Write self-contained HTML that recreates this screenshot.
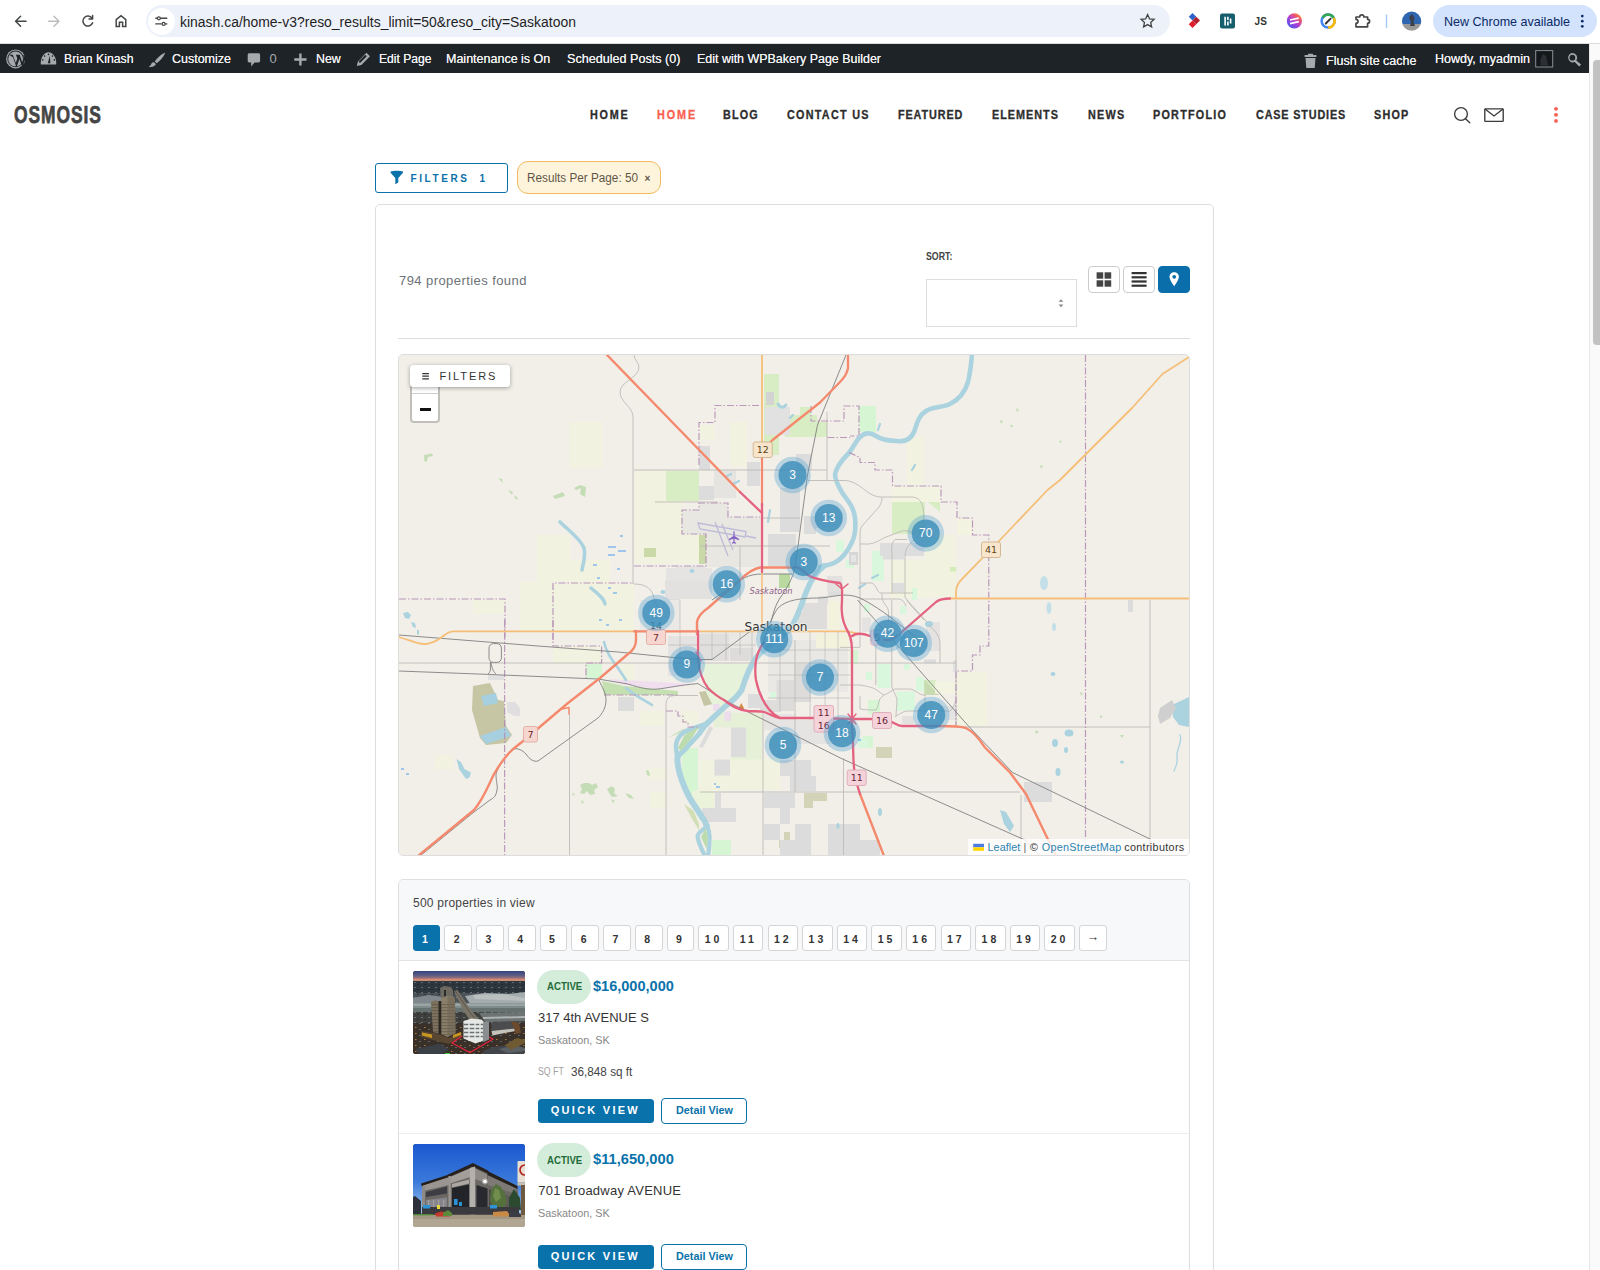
<!DOCTYPE html>
<html lang="en">
<head>
<meta charset="utf-8">
<title>Home v3 - Brian Kinash</title>
<style>
*{box-sizing:border-box;margin:0;padding:0}
html,body{width:1600px;height:1270px;overflow:hidden;background:#fff}
body{font-family:"Liberation Sans","DejaVu Sans",sans-serif;color:#333;position:relative}
.b{position:absolute}
.t{position:absolute;white-space:nowrap;line-height:1;transform-origin:0 50%}
svg{position:absolute;overflow:visible}
/* browser chrome */
#chrome{left:0;top:0;width:1600px;height:44px;background:#fff;border-bottom:1px solid #dadce0}
#urlpill{left:146px;top:5px;width:1024px;height:32px;border-radius:16px;background:#edf1fa}
#urlicon{left:148px;top:8px;width:27px;height:27px;border-radius:14px;background:#fff}
#newchrome{left:1433px;top:5px;width:164px;height:32px;border-radius:16px;background:#d3e3fd}
/* wp admin bar */
#wpbar{left:0;top:44px;width:1589px;height:29px;background:#1d2327}
/* scrollbar */
#sbar{left:1589px;top:44px;width:11px;height:1226px;background:#fafafa;border-left:1px solid #e8e8e8}
#sthumb{left:1593px;top:60px;width:7px;height:285px;border-radius:4px 0 0 4px;background:#c2c2c2}
/* content */
#card{left:375px;top:203.8px;width:838.6px;height:1100px;border:1px solid #dedede;border-radius:5px;background:#fff}
#fbtn{left:375px;top:163px;width:133px;height:30px;border:1px solid #0a72ab;border-radius:3px;background:#fff}
#chip{left:517px;top:161px;width:144px;height:33px;border:1px solid #f3b95f;border-radius:11px;background:#fef4dc}
#sel{left:926px;top:279px;width:151px;height:48px;border:1px solid #ddd;background:#fff}
.vb{top:266px;width:32px;height:27px;border:1px solid #ccc;border-radius:4px;background:#fff}
#hr1{left:398px;top:338px;width:792px;height:1px;background:#ddd}
#map{left:398px;top:354px;width:792px;height:502px;border:1px solid #ddd;border-radius:5px;background:#f2efe9;overflow:hidden}
#map svg{left:0;top:0}
#mfbtn{left:11px;top:10px;width:100px;height:22px;border-radius:3px;background:#fff;box-shadow:0 1px 4px rgba(0,0,0,.35)}
#zoomc{left:11px;top:10px;width:30px;height:58px;border:2px solid rgba(0,0,0,.2);border-radius:4px;background:#fff;background-clip:padding-box}
#attr{right:0;bottom:0;width:221px;height:16px;background:rgba(255,255,255,.8)}
.mk{position:absolute;width:36px;height:36px;margin:-18px 0 0 -18px;border-radius:18px;background:rgba(80,150,195,.45)}
.mk i{position:absolute;left:4.5px;top:4.5px;width:27px;height:27px;border-radius:14px;background:rgba(45,125,175,.88);color:#fff;font:normal 11px/27px "Liberation Sans",sans-serif;text-align:center;display:block}
.sh{position:absolute;border-radius:2px;font:normal 9.5px/1 "DejaVu Sans","Liberation Sans",sans-serif;text-align:center;color:#5a3a2a}
.sh.o{background:#f8e5cb;border:1px solid #cbb08a;color:#5a4520}
.sh.p{background:#f7d6d2;border:1px solid #e2a59f;color:#6a2a2a}
.sh.r{background:#f2d0d8;border:1px solid #dca0b0;color:#6a2238}
#list{left:398px;top:879px;width:792px;height:420px;border:1px solid #dedede;border-radius:5px;background:#fff;overflow:hidden}
#lhead{left:0;top:0;width:792px;height:81px;background:#f7f8f9;border-bottom:1px solid #e3e3e3}
.pg{position:absolute;top:924.6px;height:26px;border:1px solid #d5d5d5;border-radius:3px;background:#fff;font-weight:bold;font-size:10.5px;line-height:26px;text-align:center;letter-spacing:3px;color:#333}
.pg.on{background:#0a72ab;border-color:#0a72ab;color:#fff}
.badge{left:537px;width:54px;height:34px;border-radius:17px;background:#d4edda}
.qv{left:537.5px;width:116px;height:24px;border-radius:3.5px;background:#0a72ab}
.dv{left:661px;width:86px;height:26px;border-radius:4px;border:1px solid #0a72ab;background:#fff}
.ph{left:413px;width:112px;height:83px;border-radius:3px;overflow:hidden;background:#555}
.ph svg{left:0;top:0}
#sep1{left:399px;top:1133px;width:790px;height:1px;background:#ececec}
</style>
</head>
<body>
<!-- BROWSER CHROME -->
<div class="b" id="chrome"></div>
<div class="b" id="urlpill"></div><div class="b" id="urlicon"></div>
<div class="b" id="newchrome"></div>
<svg width="1600" height="44" viewBox="0 0 1600 44" style="left:0;top:0">
<g fill="none" stroke="#444746" stroke-width="1.5" stroke-linecap="round" stroke-linejoin="round">
<path d="M26 21.2H15.6M20.6 16.2l-5 5 5 5"/>
<path d="M48.6 21.2H59M54 16.2l5 5-5 5" stroke="#bdbdbd"/>
<path d="M92 18.2a5 5 0 1 0 .6 4.6M92.6 15.4v3.6h-3.6"/>
<path d="M116.2 26.6v-7l4.8-3.9 4.8 3.9v7h-3.2v-4.4h-3.2v4.4z" stroke-linejoin="miter"/>
<path d="M155.8 18.3h1M161.2 18.3h5.6M155.8 23.9h5.4M165.6 23.9h1.2" stroke-width="1.4"/>
<circle cx="158.9" cy="18.3" r="1.5" stroke-width="1.3"/><circle cx="163.6" cy="23.9" r="1.5" stroke-width="1.3"/>
<path d="M1147.6 14.6l1.95 4.2 4.55.5-3.4 3.1.95 4.5-4.05-2.3-4.05 2.3.95-4.5-3.4-3.1 4.55-.5z" stroke-width="1.3" stroke-linejoin="miter"/>
<path d="M1356 17h3.700a2.100 2.100 0 1 1 4.200 0h3.700v2.300a2 2 0 1 1 0 4v3.500h-11.600v-3.500a2 2 0 1 0 0-4z" stroke-width="1.700"/>
</g>
<path d="M1386.5 14.5v13.5" stroke="#a8c7fa" stroke-width="1.4"/>
<!-- extension 1 -->
<path d="M1192.500 13l3.750 3.750-3.750 3.750-3.750-3.750z" fill="#2f62c8"/><path d="M1196.250 16.750l3.750 3.750-3.750 3.750-3.750-3.750z" fill="#b3202c"/><path d="M1192.500 20.500l3.750 3.750-3.750 3.750-3.750-3.750z" fill="#dc1f2a"/>
<!-- extension 2 -->
<rect x="1220" y="13.600" width="15" height="15" rx="2" fill="#155e6e"/><path d="M1225.100 16.800v8.800M1227.900 16.800v3.200M1227.900 21.600v4M1230.600 18.600v5" stroke="#fff" stroke-width="1.600" fill="none"/>
<!-- extension 4 -->
<defs><linearGradient id="g4" x1=".15" y1=".9" x2=".85" y2=".1"><stop offset="0" stop-color="#4a55ea"/><stop offset=".45" stop-color="#b03fd6"/><stop offset=".8" stop-color="#ee5a6a"/><stop offset="1" stop-color="#f58a3a"/></linearGradient></defs>
<circle cx="1294.400" cy="20.900" r="7.600" fill="url(#g4)"/><path d="M1290 20l8.750-1.900M1290 23.600l8.750-1.900" stroke="#fff" stroke-width="1.700"/>
<!-- extension 5 -->
<circle cx="1328.100" cy="21.100" r="6.500" fill="#fff" stroke="#4285f4" stroke-width="2.500"/>
<path d="M1322.470 17.850a6.500 6.500 0 0 1 11.260 0" fill="none" stroke="#34a853" stroke-width="2.500"/>
<path d="M1333.730 17.850a6.500 6.500 0 0 1-5.630 9.750" fill="none" stroke="#fbbc04" stroke-width="2.500"/>
<path d="M1325.800 23.500l4.800-4.800" stroke="#333" stroke-width="1.900" stroke-linecap="round"/>
<!-- avatar -->
<defs><clipPath id="av"><circle cx="1411.6" cy="21.2" r="9.6"/></clipPath></defs>
<g clip-path="url(#av)"><rect x="1402" y="11" width="20" height="13" fill="#2f66b0"/><rect x="1402" y="24" width="20" height="8" fill="#9a9a98"/><path d="M1409 17l3-3 2.5 3.5-1 4.5 1.5 4h-5l1-4z" fill="#3a3f4a"/></g>
<!-- menu dots -->
<g fill="#0a2a66"><circle cx="1582.3" cy="16.1" r="1.35"/><circle cx="1582.3" cy="21.2" r="1.35"/><circle cx="1582.3" cy="26.3" r="1.35"/></g>
</svg>

<!-- WP ADMIN BAR -->
<div class="b" id="wpbar"></div>
<svg width="1600" height="30" viewBox="0 43.6 1600 30" style="left:0;top:43.6px">
<g fill="#a7aaad">
<!-- wp logo -->
<circle cx="15.6" cy="58.5" r="9.5"/>
<circle cx="15.6" cy="58.5" r="8.3" fill="#1d2327"/>
<circle cx="15.6" cy="58.5" r="7.4"/>
<path d="M9.2 54.4h3.6l3 8.2 1.5-4.4-1.4-3.8h3.8l2.7 8 1.2-4.2c.4-1.5 0-2.4-.6-3.2l1.4-.3 1 3.5-3 8.8-3-8.3-2.9 8.3-3.4-9.8z" fill="#1d2327"/>
<!-- dashboard -->
<path d="M40.8 64.2c-.6-6.500 3-12.300 7.700-12.300s8.300 5.800 7.700 12.300z"/>
<path d="M47.800 62.800l2-7.500.6 7.600z" fill="#1d2327"/>
<g fill="#1d2327"><circle cx="48.500" cy="54" r=".8"/><circle cx="44.600" cy="55.700" r=".8"/><circle cx="52.400" cy="55.700" r=".8"/><circle cx="42.700" cy="59.500" r=".8"/><circle cx="54.300" cy="59.500" r=".8"/></g>
<!-- brush -->
<path d="M164.800 52.400c-3.500 1.500-8 5.500-10 8.600l2 1.900c3-2 7-6.700 8.400-10.200zM154 61.800l1.900 1.800c-.6 2-3.400 3.400-7.300 2.700 2-.8 2.300-2.300 3-3.500.6-.9 1.600-1.200 2.400-1z"/>
<!-- comment -->
<path d="M249.300 52.800h9.200c.9 0 1.600.7 1.600 1.600v6c0 .9-.7 1.600-1.600 1.600h-4l-3.300 4.200v-4.200h-1.900c-.9 0-1.600-.7-1.600-1.600v-6c0-.9.700-1.600 1.600-1.600z"/>
<!-- plus -->
<path d="M299.200 53h2.400v4.900h4.900v2.400h-4.900v4.900h-2.400v-4.900h-4.900v-2.400h4.900z"/>
<!-- pencil -->
<path d="M366.400 52.300l3.600 3.600-8.600 8.600-4.600 1.200 1.100-4.700zM360 62.700l-1.500-1.500 6.800-6.800 1.500 1.500z" fill-rule="evenodd"/>
<!-- trash -->
<path d="M1308 53.300h5v1.400h3.400v1.800h-11.800v-1.800h3.400zM1305.500 57.600h10l-.8 9.900h-8.400z"/>
<!-- search -->
<path d="M1572.400 52.600a4.700 4.700 0 0 1 3.900 7.400l4.800 4.100-1.900 2-4.500-4.500a4.700 4.700 0 1 1-2.300-9zm0 1.800a2.900 2.900 0 1 0 0 5.800 2.900 2.900 0 0 0 0-5.800z" fill-rule="evenodd"/>
</g>
<!-- avatar -->
<rect x="1535.700" y="50.200" width="17" height="16.400" fill="#15181b" stroke="#8c8f94" stroke-width="1"/>
<path d="M1540.500 65v-6l2.500-5.500 3 2 2 9.500z" fill="#2c3035"/>
</svg>

<div class="b" id="sbar"></div><div class="b" id="sthumb"></div>
<!-- SITE HEADER -->
<div class="t" id="logo" style="left:13.5px;top:103.4px;font-size:24.4px;font-weight:bold;color:#454545;transform-origin:0 0;transform:scaleX(.715);letter-spacing:1.3px;-webkit-text-stroke:.75px #454545">OSMOSIS</div>
<svg width="120" height="30" viewBox="1450 100 120 30" style="left:1450px;top:100px">
<g fill="none" stroke="#3a3a3a" stroke-width="1.35">
<circle cx="1461" cy="114" r="6.4"/><path d="M1465.500 118.700l4.300 4" stroke-linecap="round"/>
<rect x="1484.800" y="108.800" width="18.400" height="12.600" rx=".6"/><path d="M1485 109l9 7 9-7"/>
</g>
<g fill="#f95f51"><circle cx="1556" cy="108.800" r="1.900"/><circle cx="1556" cy="114.800" r="1.900"/><circle cx="1556" cy="120.900" r="1.900"/></g>
</svg>

<!-- CONTENT -->
<div class="b" id="card"></div>
<div class="b" id="fbtn"></div>
<div class="b" id="chip"></div>
<div class="b" id="sel"></div>
<div class="b vb" style="left:1088px"></div>
<div class="b vb" style="left:1123px"></div>
<div class="b vb" style="left:1158px;background:#0a6eab;border-color:#0a6eab"></div>
<div class="b" id="hr1"></div>
<svg width="840" height="200" viewBox="375 150 840 200" style="left:375px;top:150px">
<!-- funnel -->
<path d="M390.600 171.400c3-.9 9.400-.9 12.400 0v1.300l-4.700 5.200v4.700l-3 1.600v-6.300l-4.700-5.200z" fill="#0a72ab"/>
<!-- grid -->
<g fill="#444"><rect x="1096.600" y="272.300" width="6.600" height="6.400"/><rect x="1104.600" y="272.300" width="6.600" height="6.400"/><rect x="1096.600" y="280.300" width="6.600" height="6.400"/><rect x="1104.600" y="280.300" width="6.600" height="6.400"/></g>
<!-- list -->
<g fill="#333"><rect x="1131.600" y="272" width="15" height="2.200"/><rect x="1131.600" y="276.200" width="15" height="2.200"/><rect x="1131.600" y="280.400" width="15" height="2.200"/><rect x="1131.600" y="284.600" width="15" height="2.200"/></g>
<!-- pin -->
<path d="M1174.200 272.200c2.600 0 4.700 2 4.700 4.600 0 3.300-4.700 9.400-4.700 9.400s-4.700-6.100-4.700-9.400c0-2.600 2.100-4.600 4.700-4.600zm0 2.700a1.900 1.900 0 1 0 0 3.800 1.900 1.900 0 0 0 0-3.800z" fill="#fff" fill-rule="evenodd"/>
<!-- select arrows -->
<path d="M1058.600 301.800l2.400-2.600 2.400 2.600zM1058.600 304.600l2.400 2.600 2.400-2.600z" fill="#888"/>

</svg>
<svg width="800" height="510" viewBox="398 354 800 510" style="left:398px;top:354px;z-index:5">
<!-- hamburger -->
<path d="M422.300 373.600h6.600M422.300 376.200h6.600M422.300 378.800h6.600" stroke="#333" stroke-width="1.200"/>
<!-- flag -->
<rect x="973.200" y="843.800" width="10.800" height="3.500" fill="#4c7be1"/><rect x="973.200" y="847.300" width="10.800" height="3.500" fill="#ffd500"/>
</svg>

<!-- MAP -->
<div class="b" id="map">
<svg width="790" height="500" viewBox="399 355 790 500">
<rect x="399" y="355" width="790" height="500" fill="#f2efe9"/>
<!-- farmland / pale areas -->
<g fill="#f1f2df">
<rect x="569.500" y="422" width="33" height="46"/>
<rect x="537" y="535" width="33" height="47"/><rect x="520" y="582" width="33" height="48"/><rect x="473" y="600" width="32" height="14"/>
<rect x="553" y="584" width="81" height="46"/><rect x="570" y="560" width="40" height="24"/>
<rect x="635" y="471" width="31" height="93"/><rect x="666" y="501" width="16" height="63"/><rect x="682" y="534" width="17" height="30"/>
<rect x="700" y="425" width="15" height="15"/><rect x="730" y="422" width="17" height="45"/>
<rect x="907" y="437" width="17" height="48"/><rect x="925" y="535" width="31" height="62"/><rect x="890" y="560" width="35" height="38"/>
<rect x="730" y="758" width="50" height="32"/>
<rect x="640" y="711" width="24" height="15"/><rect x="682" y="711" width="16" height="13"/><rect x="648" y="768" width="18" height="12"/><rect x="650" y="792" width="16" height="16"/>
<rect x="698" y="792" width="16" height="16"/><rect x="553" y="646" width="48" height="17"/><rect x="620" y="664" width="14" height="16"/>
<rect x="957" y="672" width="30" height="54"/><rect x="435" y="755" width="18" height="14"/>
</g>
<!-- grass / light green -->
<g fill="#d9edc5">
<rect x="666" y="471" width="33" height="30"/><rect x="764" y="374" width="15" height="81"/><rect x="785" y="415" width="32" height="22"/>
<rect x="800" y="407" width="11" height="30"/><rect x="811" y="422" width="16" height="15"/><rect x="892" y="502" width="33" height="32"/>
<path d="M928 502h12v10z"/><rect x="924" y="680" width="12" height="14"/>
</g>
<g fill="#c9d9a8"><rect x="699" y="535" width="7" height="29"/><rect x="644" y="548" width="12" height="9"/></g>
<g fill="#d6f5d3">
<rect x="859" y="406" width="17" height="26"/><rect x="586" y="664" width="16" height="14"/><rect x="682" y="748" width="16" height="42"/><rect x="686" y="790" width="10" height="6"/>
<rect x="712" y="840" width="19" height="16"/><rect x="878" y="664" width="10" height="20"/><rect x="850" y="650" width="8" height="14"/><rect x="868" y="700" width="12" height="14"/>
<rect x="779" y="574" width="11" height="14" fill="#b9d9a0"/><rect x="863" y="736" width="10" height="12"/>
</g>
<g fill="#d8f7dc">
<rect x="872" y="551" width="12" height="30"/><rect x="877.500" y="664" width="13" height="24"/><rect x="897" y="691.500" width="18" height="19"/><rect x="916" y="677" width="8" height="14"/>
<rect x="800" y="650" width="6" height="10"/><rect x="786" y="664" width="5" height="8"/><rect x="812" y="684" width="8" height="8"/><rect x="828" y="662" width="6" height="9"/><rect x="770" y="690" width="6" height="8"/>
<rect x="716" y="636" width="5" height="7"/><rect x="730" y="646" width="6" height="6"/><rect x="744" y="640" width="4" height="8"/><rect x="684" y="574" width="8" height="6"/><rect x="700" y="584" width="6" height="8"/><rect x="672" y="600" width="6" height="8"/>
<rect x="864" y="604" width="6" height="8"/><rect x="900" y="606" width="6" height="8"/><rect x="912" y="588" width="5" height="12"/><rect x="846" y="560" width="8" height="8"/><rect x="836" y="540" width="8" height="12"/>
<rect x="866" y="672" width="6" height="8"/><rect x="904" y="664" width="6" height="6"/><rect x="858" y="738" width="10" height="10"/><rect x="822" y="732" width="6" height="8"/>
</g>
<path d="M924.300 679.400L939 695H924.300z" fill="#c8dab0"/>
<g fill="#f3f3e2"><rect x="892" y="486.600" width="48" height="15.400"/><rect x="935" y="681.600" width="21" height="12"/><rect x="957" y="518.600" width="15" height="16.400"/></g>
<rect x="950" y="567" width="6.300" height="4.500" fill="#d3ecba"/>
<!-- khaki -->
<g fill="#c6c5a4">
<path d="M473 686l17-3 8 17 6 1 2 25 6 9-6 8-20 2-6-7-8-28z"/><path d="M699 692l13-2 1 14-9 2z"/>
<rect x="804" y="793" width="23" height="8" fill="#d3d3b8"/><rect x="804" y="801" width="9" height="7" fill="#d3d3b8"/><rect x="876" y="747" width="16" height="11" fill="#d3d3b8"/>
<path d="M779 840h5v-8h6v16h-11z" fill="#d3d3b8"/>
</g>
<!-- airport apron -->
<path d="M682 510h17v-7h29v14h32v50h-54v-33h-24z" fill="#e9e7e2"/>
<!-- built-up grey -->
<g fill="#dddcdc">
<rect x="699" y="446" width="11" height="24"/><rect x="699" y="486" width="15" height="14"/><rect x="747" y="462" width="13" height="24"/>
<rect x="766" y="392" width="8" height="13" fill="#d3d3d3"/><rect x="765" y="407" width="25" height="28" fill="#e2e1e1"/><rect x="796" y="454" width="16" height="16"/>
<rect x="780" y="488" width="20" height="44"/><rect x="768" y="534" width="28" height="32"/><rect x="804" y="516" width="12" height="18"/><rect x="816" y="520" width="14" height="8"/>
<rect x="880" y="543" width="44" height="13" fill="#dedddd"/><rect x="883" y="556" width="21" height="3.500" fill="#dedddd"/><rect x="892" y="583" width="12" height="9.500" fill="#dedddd"/><rect x="849" y="552" width="9" height="13" fill="#d6d6d6"/><rect x="851" y="555" width="5" height="7" fill="#e4e4e4"/>
<rect x="828" y="584" width="14" height="12"/><rect x="668" y="590" width="12" height="10"/>
<rect x="731" y="729" width="15" height="28"/><rect x="715" y="760" width="15" height="15"/><rect x="780" y="760" width="31" height="16"/><rect x="790" y="776" width="26" height="15"/>
<rect x="715" y="793" width="6" height="15"/><rect x="702" y="808" width="34" height="14"/><rect x="764" y="793" width="31" height="15"/><rect x="780" y="808" width="10" height="16"/>
<rect x="764" y="824" width="16" height="16"/><rect x="795" y="824" width="16" height="32"/><rect x="780" y="840" width="15" height="16"/>
<rect x="828" y="824" width="32" height="32"/><rect x="860" y="840" width="20" height="16"/><rect x="618" y="697" width="16" height="14"/>
<rect x="748" y="694" width="14" height="14"/><rect x="1024" y="782" width="28" height="20"/><rect x="714" y="632" width="14" height="22" fill="#e2e1e1"/>
<rect x="714" y="808" width="2" height="0"/><rect x="488" y="675" width="16" height="5" fill="#e0e0e0"/><path d="M507 702h8l5 6v8h-6l-7-4z" fill="#e0dede"/>
<rect x="1128" y="600" width="5" height="12"/><rect x="953" y="660" width="4" height="12" fill="#e0e0e0"/>
</g>
<!-- residential light grey -->
<g fill="#e6e4e2">
<rect x="714" y="470" width="22" height="28"/><rect x="666" y="568" width="46" height="30"/><rect x="676" y="566" width="30" height="6"/>
<rect x="764" y="714" width="32" height="16"/><rect x="796" y="720" width="44" height="24"/>
<rect x="768" y="640" width="80" height="52" fill="#eae8e4"/><rect x="700" y="632" width="56" height="28" fill="#eae8e4"/><rect x="668" y="636" width="28" height="40" fill="#e4e3e2"/>
<rect x="926" y="622" width="14" height="29" fill="#e4e3e2"/><rect x="862" y="617.600" width="9" height="14.400" fill="#e4e3e2"/><rect x="924" y="659.500" width="12" height="4" fill="#dddcdc"/>
<rect x="902" y="716" width="12" height="8" fill="#e2e1e0"/><rect x="940" y="706" width="16" height="14" fill="#e6e4e2"/><rect x="640" y="600" width="40" height="30" fill="#ebe9e5"/>
</g>
<g fill="#dedddc"><rect x="803" y="603" width="24" height="26"/><rect x="798" y="612" width="6" height="12"/><rect x="730" y="648" width="23" height="13"/><rect x="712" y="664" width="12" height="10"/><rect x="760" y="700" width="20" height="12"/><rect x="818" y="596" width="10" height="8"/></g>
<path d="M702 664H752L742 686 730 703 716 712 706 692z" fill="#e7f2da"/>
<path d="M713.600 712.800H762V759.600H731V727.500H713.600z" fill="#e6f0d6"/><rect x="731" y="727.500" width="15" height="29.500" fill="#dddcdc"/>
<g fill="#f3f2dd"><rect x="828.500" y="601" width="11" height="28"/><rect x="816" y="634" width="33" height="14"/></g>
<g fill="#dddcdb"><rect x="794" y="664" width="17" height="38"/><rect x="776.500" y="680" width="17.500" height="31"/><rect x="827" y="576" width="15.500" height="15.500" fill="#e2e1e0"/><rect x="699" y="634" width="30" height="27" fill="#e0dfde"/><rect x="731" y="648" width="17" height="13"/><rect x="665" y="580.500" width="47" height="18.500" fill="#e2e1e0"/></g>
<g fill="#f1f2df"><rect x="699" y="759.600" width="31" height="31.400"/></g><rect x="714.300" y="759.600" width="15.700" height="16" fill="#dddcdc"/>
<rect x="692" y="791" width="22" height="17" fill="#ebf3da"/>
<path d="M709.600 726L713 728 703 747.500 699 747z" fill="#dddcdc"/>
<g fill="#eddcec"><rect x="713" y="704" width="6.600" height="6.700"/><rect x="724.300" y="711.400" width="6.700" height="9.400"/></g>
<path d="M738.300 709L741.300 703 744.300 709z" fill="#d4883f"/>
<!-- pink industrial strip + green strip -->
<path d="M608 679l50 3 36 2-36 5-34-4z" fill="#f0ddee"/>
<path d="M602 681l22 5 54 5v4h-74z" fill="#c4dfb0"/>

<!-- forest blobs -->
<g fill="#b9d8aa" opacity=".8">
<path d="M424 455l8-1.500 1 2.500-5 1-1.500 5-2-.5z M498 478l4 1 1 4z M508 490l5 2-1 3z M514 495l4 3-2 2z M553 496l10-4 2 4-10 3z M574 488l6-3 6 2-1 10-5-3 1-6-5 2z"/>
<path d="M580 785l4-2 5 0 3 2 4-2 2 4-4 3 1 4-5 1-3-4-3 3-4-1 2-4z M607 789l5-3 3 3-1 4 4 3-6 1-3-4z M625 793l6 2 3 4-5-1z M581 800l3 2-2 2z M646 770l3 1 1 5-3-1z M611 799l4 2-2 2z M572 793l3 1-2 2z"/>
<path d="M1000 420l3 1-2 3z M1010 425l3 0-1 3z M1016 408l3 2-2 2z M1040 465l3 1-2 3z M1060 440l2 2-3 1z M1035 730l4 2-3 2z M1120 735l4 0-2 3z M1100 715l3 2-3 1z M1080 692l3 1-2 3z"/>
</g>

<!-- WATER -->
<g fill="none" stroke="#aad3df" stroke-linecap="round" stroke-linejoin="round">
<path d="M972 354C971 366 970 374 968 382C965 392 958 400 950 404C942 408 934 406 926 411C918 416 917 424 914 432C911 439 905 442 897 441C888 441 882 440 876 436C870 432 864 433 859 438C854 444 852 450 848 454C842 460 837 466 835 474C835 480 838 486 843 494C849 502 854 508 855 518C856 528 855 536 852 542C848 551 842 559 834 563C828 566 824 565 820 567" stroke-width="4.600"/>
<path d="M824 566C816 572 811 580 807 590C803 600 800 610 796 618C792 628 786 634 778 640C770 646 762 650 756 658C750 666 746 676 741.700 690C738 696 731 702 725.700 706C720 711 713 718 707 723.500" stroke-width="5.600"/>
<path d="M707 723.500C698 727 690 729 684 732C679 736 676 740 676 746C676 750 677 754 677.500 757" stroke-width="4.600"/>
<path d="M707 723.500C703 728 701 731 699 734C694 740 689 744 685.500 749C682 752 679 755 677.500 757" stroke-width="5"/>
<path d="M677.500 757C677 762 678 766 678.800 770C680 776 682 781 684 786C687 793 690 799 693.500 804C697 809 700 814 703 818.500C705 821 706 824 707 826.500" stroke-width="6"/>
<path d="M707 826.500C702 830 698 833 697.500 836C698 842 701 848 704 854 M707 826.500C709 830 709.600 834 709.600 837C709.600 844 709 850 708 857" stroke-width="4.200"/>
<path d="M560 522C568 530 580 538 584 548C586 556 583 564 582 570" stroke-width="3.600"/>
<path d="M591 588C598 594 604 598 605 604" stroke-width="3.500"/>
<path d="M604 642C606 652 612 660 618 668C622 674 624 677 626 680 M626 688C632 694 644 700 652 705" stroke-width="2.600"/>
<path d="M778 404C780 408 784 408 786 405" stroke-width="3"/>
<path d="M770 510l-2 12 M790 418l3 -3 M733 484l6-3 M727 476l4-2 M859 588l6-4 M872 578l6-3 M878 430l2-6 M912 470l3-5" stroke-width="2.200"/>
<path d="M1180 735c3 8-4 14-3 22s-2 10-3 14" stroke-width="1.300"/>
</g>
<g fill="#aad3df">
<path d="M456.500 759l2.500 10 7 10 3.500-1.500 1.500-5-6.500-3.500-3.500-7z"/><path d="M481 696l15-3 2 10-14 3z M480 736l26-9 5 9-25 8z" fill="#a6cfdf"/>
<ellipse cx="1055" cy="743" rx="3" ry="4"/><ellipse cx="1069" cy="733" rx="4.500" ry="3.500"/><ellipse cx="1058" cy="772" rx="2.500" ry="4"/><ellipse cx="1066" cy="750" rx="2" ry="3"/>
<path d="M1000 810l6 2 8 14-4 6-6-8z"/><ellipse cx="1053" cy="674" rx="2.500" ry="2"/><ellipse cx="1122" cy="762" rx="2" ry="1.500"/>
<path d="M403 613l5-1 3 3-2 4-4-1z M411 622l4 1 1 5-3-1z M417 630l2 0 0 5-2-1z"/>
<path d="M1172 705l17-8v30l-10-2-6-8z"/><path d="M1160 708l12-8 4 8-6 10-10 6-2-8z" fill="#cfcfcf"/>
<ellipse cx="929" cy="624" rx="4" ry="3"/><ellipse cx="760" cy="638" rx="0" ry="0"/><ellipse cx="880" cy="812" rx="2" ry="4"/><ellipse cx="838" cy="826" rx="1.500" ry="3"/>
<ellipse cx="692" cy="571" rx="2.500" ry="2"/><ellipse cx="663" cy="592" rx="2.500" ry="2"/>
<ellipse cx="1044" cy="583" rx="4" ry="7" fill="#c3dfe8"/><ellipse cx="1049" cy="608" rx="2.500" ry="6" fill="#c3dfe8"/><ellipse cx="1054" cy="627" rx="2" ry="4" fill="#c3dfe8"/>
</g>
<!-- intermittent blue dashes -->
<g stroke="#4d9cf5" stroke-width="1.200" fill="none">
<path d="M608 547h8 M618 551h8 M608 555h7 M593 565h4 M617 569h3 M597 578h3 M608 588h3 M613 593h4 M620 536h3 M599 620h3 M619 620h3 M606 625h3 M401 769h3 M406 774h3 M716 787h4 M714 784h2 M858 740h3"/>
</g>
<!-- islands in river -->
<path d="M678 748L684.500 735 699 726.500 693.500 735.500 681 751z M701 837L705.600 828.500 708 837 706.500 849z" fill="#bcdcae"/><path d="M668 738L685.500 727.500 679 733z" fill="#c2dfb2"/><path d="M684 804L693.500 810.500 699 824V830.500L691 817z" fill="#d2dfb4"/>
<!-- MINOR ROADS -->
<g fill="none" stroke="#bdbbb7" stroke-width=".9">
<path d="M634 355C634 360 639 362 639 368C638 378 620 382 620 392C620 402 632 406 633 416V584"/>
<path d="M634 470H827 M655 502H718 M399 663H956 M700 792H1020 M1021 795V856 M956 727H1150 M1150 600V856 M956 600V727"/>
<path d="M569.500 714V856 M666 856V704Q666 696 674 695.500H698 M763 712V856 M843.500 758V856 M795 640V792 M827 412V480"/>
<path d="M808 480.500H846C856 482 862 488 867.500 492C872 495 875 496.500 880 497H913C919 498 922 502 923 508C924 514 924 520 924 526C923 531 921 534 919 535C914 540 908 545 906 550C905 553 905 556 905 560V597C908 602 912 607 915 610L924 620"/>
<path d="M882 497.600C882 501 881 504 879 507L862 526C860 529 860 532 860 535V647"/>
<path d="M860 544H869C876 543 880 540 886 537L902 531C908 530 912 532 915 535"/>
<path d="M892 593.500V553C891 547 892 542 895 539.500H907"/>
<path d="M860 583H872C875 585 876 587 877 589C878 591 879 593 881 593H913"/>
<path d="M860 599H899.500C903 600 905 603 906 606"/>
<path d="M882 593.600C882 597 882 600 884 603C886 606 888.500 608 888.500 612V622"/>
<path d="M840 647.400H860 M875.800 646V685 M891.800 600V686C892 690 896 695 897 699C897 706 896 712 896 716"/>
<path d="M928 625C932 628 936 632 937 634C939 637 940 640 940 644V663"/>
<path d="M840 685H860C866 686 870 687 873 688C878 690 881 694 884 695C888 694 892 690 895 689H910.500C914 690 917 692 919.400 693.700L926 696"/>
<path d="M860 696V709C866 710 872 710 876.400 710C878 706 879 702 879.700 699L884 695"/>
<path d="M925 697V716 M895 717C899 714 903 712 906 711H950C953 708 955 704 956 700"/>
<path d="M907 600L927 622"/>
<path d="M762 546H830 M762 518H800 M700 546H762 M740 546V600"/>
<path d="M634 584C648 584 652 590 654 598C656 606 660 612 668 612"/>
<path d="M768 650H850 M768 675H850 M768 698H850 M780 632V712 M810 632V720 M825 632V720 M838 632V720 M752 632V660" stroke-opacity=".75"/>
<path d="M700 645H756 M712 632V660 M726 632V660 M740 632V655 M668 645H698 M680 600V660" stroke-opacity=".75"/>
</g>
<!-- BOUNDARIES -->
<g fill="none" stroke="#b48fb6" stroke-width="1.200" stroke-dasharray="7 2 1.500 2" opacity=".9">
<path d="M399 599H505V640 M553 640V583H634 M634 566H706V534H682V510H699V503H728V517H760"/>
<path d="M699 465V422.500H715V405.500H761 M811 406V421H844V406H859V436H850 M827.500 437.500H850"/>
<path d="M849 452.500L860 457.500V462.500H875V470H892.500V486H941V502H957V518H972.500V535H988.750V646H980V655H972.500V671H956V725"/>
<path d="M1085.500 355V856 M504.600 620V856 M553 620V646H601.600V663H586V678 M604 695H678 M666 711H678V716H683V722H688V727H698"/>
<path d="M1145 598.500H1190" stroke="#b08a70"/>
</g>
<!-- RAILWAYS -->
<g fill="none" stroke="#808080" stroke-width=".9">
<path d="M846 355L817.500 425L807.500 475L797.500 550L795 567.500C793 578 786 590 780 598C775 606 773 614 771 622"/>
<path d="M399 635L538 646L618 652L668 657L698 659.500H712L752 630"/>
<path d="M399 671L488 674.400L598 679L628 684C640 688 650 690 658 689C668 688 680 685 698 683.600L724 700L842.500 759L1025 840L1040 856"/>
<path d="M857.500 600L967.500 725L1012.500 772.500L1150 839V856"/>
<path d="M764 640C768 628 772 616 778 608C786 600 800 598 820 598C834 597 846 592 860 598C876 606 892 618 904 628C912 634 916 638 920 642"/>
<path d="M712 600L744 578C750 575 756 574 762 574H792"/>
<path d="M599 680C602 688 606 692 606 700C606 708 602 714 598 718L538 761C534 762 530 760 526 754C522 750 518 748 514 749C506 756 498 766 496 774C496 782 498 786 497 790C496 796 494 798 490 800L474 812L420 856"/>
<rect x="489" y="643.600" width="12.400" height="18.800" rx="4.500"/><path d="M490.400 662V670C490 672 489 673 488 674 M491 662C492 670 494 672 496 674"/>
</g>
<!-- airport runways -->
<g fill="none" stroke="#bdbbd8" stroke-width="1.300"><path d="M698 523L746 531.500L745 537L700 529z M715 522L728 556 M722 524L733 550 M746 536L756 538"/></g>
<path d="M734 532v4l-4.500 3v1.200l4.500-1.400v3l-1.400 1v1l2-.6 2 .6v-1l-1.400-1v-3l4.500 1.400v-1.200l-4.500-3v-4c0-1.400-1.200-1.400-1.200 0z" fill="#8461c4" transform="translate(-.6 0)"/>
<!-- PRIMARY (yellow-orange) -->
<g fill="none" stroke="#f5bf78" stroke-width="1.800" stroke-linecap="round" stroke-linejoin="round">
<path d="M762 355V450"/>
<path d="M399 637C410 640 418 645 426 644C434 643 438 640 442 637C446 634 448 631.400 454 631.400H634"/>
<path d="M700 631.400H846C852 632 856 633 860 634"/>
<path d="M762 572V632" stroke-width="1.500"/>
<path d="M1189 357L1162.500 374L1132.500 407.500L1060 480L1047.500 490L1000 540L962 579C958 583 956 587 956 592V598.500"/>
<path d="M950 598.500H1190"/>
</g>
<!-- TRUNK (salmon) -->
<g fill="none" stroke="#f4896d" stroke-width="2.400" stroke-linecap="round" stroke-linejoin="round">
<path d="M607 355L740 492"/>
<path d="M762 450V506" stroke-width="2.200"/>
<path d="M848 355V368C847 374 844 378 840 382L820 402.500L772.500 440L764 449" stroke-width="2.300"/>
<path d="M418 856L474 810C484 798 488 786 494 774C500 764 504 758 510 752C514 748 518 745 522 742L568 703L600 678L628 654C634 650 636 646 636 640V631"/>
<path d="M634 631.300H698" stroke-width="2.300"/>
<path d="M697 634V622C698 616 702 612 708 608L740 580C746 574 752 569 760 567.500H793"/>
<path d="M940 726C950 726 960 726 966 728C974 732 980 740 985 747.500L1010 772.500L1026 794L1056 856"/>
<path d="M860 794L884 856"/>
<path d="M562 709L569 707.500V714" stroke-width="1.500"/>
</g>
<!-- MOTORWAY (pink-red) -->
<g fill="none" stroke="#e4627f" stroke-width="2.300" stroke-linecap="round" stroke-linejoin="round">
<path d="M740 492L762 513"/>
<path d="M762 504V572"/>
<path d="M793 567.500C800 566 804 572 808 575C814 579 824 581 840 583C843 586 842 592 842 600C841 610 842 620 846 628C850 634 852 640 852 650V716"/>
<path d="M836 584l6 5 M848 584l-6 5" stroke-width="1.500"/>
<path d="M852 636C856 633 862 633 870 636C878 639 884 641 890 640C896 638 900 634 904 630L920 616L936 602C940 599 944 598.500 950 598.500"/>
<path d="M698 631V660C699 670 702 680 708 688C714 694 720 698 724 700C732 706 738 710 748 711C756 711.500 760 711 764 712C770 714 774 717 780 718H812L852 719H872C880 719 886 720 892 722C896 724 898 726 902 726H940"/>
<path d="M764 642C760 648 757 654 756 660C755 668 755 674 756 680C758 690 762 700 768 708C771 712 774 715 780 718"/>
<path d="M852 716V724C853 736 853 748 853.500 760C854 770 855 778 857 784C858 788 859 791 860 794"/>
<path d="M848 714l8 10 M856 714l-8 10" stroke-width="1.400"/>
<path d="M696 652l5 9" stroke-width="1.500"/>
</g>
<!-- LABELS -->
<g font-family="'DejaVu Sans','Liberation Sans',sans-serif">
<text x="744.500" y="630.500" font-size="13" fill="#333" textLength="63" lengthAdjust="spacingAndGlyphs" stroke="#f2efe9" stroke-width="2" paint-order="stroke" stroke-opacity=".7">Saskatoon</text>
<text x="749.500" y="593.500" font-size="9" font-style="italic" fill="#8d618b" textLength="43" lengthAdjust="spacingAndGlyphs">Saskatoon</text>
</g>
<!-- SHIELDS -->
<g font-family="'DejaVu Sans','Liberation Sans',sans-serif" font-size="9.500" text-anchor="middle">
<g fill="#f8e5cb" stroke="#c9ac83" stroke-width=".8"><rect x="753.200" y="442" width="19" height="15.500" rx="2"/><rect x="981.500" y="542" width="19" height="15.500" rx="2"/></g>
<g fill="#5a4520"><text x="762.700" y="453.300">12</text><text x="991" y="553.300">41</text></g>
<g fill="#f8d6d0" stroke="#e0a39b" stroke-width=".8"><rect x="646.500" y="629.500" width="19" height="15" rx="2"/><rect x="523.500" y="726.500" width="14" height="15.500" rx="2"/></g>
<g fill="#6a2a2a"><text x="656" y="640.800">7</text><text x="530.500" y="738">7</text><text x="656" y="628.500" fill="#444">14</text></g>
<g fill="#f4d3da" stroke="#dba2b0" stroke-width=".8"><rect x="814" y="705.500" width="19.500" height="26.500" rx="2"/><rect x="872.500" y="712.500" width="19" height="16" rx="2"/><rect x="847.200" y="770" width="19" height="15.500" rx="2"/><rect x="870.800" y="630" width="13" height="15" rx="2"/></g>
<g fill="#6a2238"><text x="823.700" y="716.300">11</text><text x="823.700" y="728.600">16</text><text x="882" y="724">16</text><text x="856.700" y="781.300">11</text><text x="877.300" y="641.300">5</text></g>
</g>
<!-- CLUSTER POINTS -->
<g>
<circle cx="792.5" cy="475" r="18.3" fill="#52a2cf" fill-opacity=".36"/><circle cx="792.5" cy="475" r="14" fill="#378cba" fill-opacity=".78"/><text x="792.5" y="478.6" font-family="'Liberation Sans',sans-serif" font-size="12" fill="#fff" text-anchor="middle">3</text>
<circle cx="828.75" cy="518" r="18.3" fill="#52a2cf" fill-opacity=".36"/><circle cx="828.75" cy="518" r="14" fill="#378cba" fill-opacity=".78"/><text x="828.75" y="521.6" font-family="'Liberation Sans',sans-serif" font-size="12" fill="#fff" text-anchor="middle">13</text>
<circle cx="925.75" cy="533.4" r="18.3" fill="#52a2cf" fill-opacity=".36"/><circle cx="925.75" cy="533.4" r="14" fill="#378cba" fill-opacity=".78"/><text x="925.75" y="537.0" font-family="'Liberation Sans',sans-serif" font-size="12" fill="#fff" text-anchor="middle">70</text>
<circle cx="803.75" cy="562" r="18.3" fill="#52a2cf" fill-opacity=".36"/><circle cx="803.75" cy="562" r="14" fill="#378cba" fill-opacity=".78"/><text x="803.75" y="565.6" font-family="'Liberation Sans',sans-serif" font-size="12" fill="#fff" text-anchor="middle">3</text>
<circle cx="726.75" cy="584.25" r="18.3" fill="#52a2cf" fill-opacity=".36"/><circle cx="726.75" cy="584.25" r="14" fill="#378cba" fill-opacity=".78"/><text x="726.75" y="587.85" font-family="'Liberation Sans',sans-serif" font-size="12" fill="#fff" text-anchor="middle">16</text>
<circle cx="656.25" cy="613" r="18.3" fill="#52a2cf" fill-opacity=".36"/><circle cx="656.25" cy="613" r="14" fill="#378cba" fill-opacity=".78"/><text x="656.25" y="616.6" font-family="'Liberation Sans',sans-serif" font-size="12" fill="#fff" text-anchor="middle">49</text>
<circle cx="774.25" cy="639.25" r="18.3" fill="#52a2cf" fill-opacity=".36"/><circle cx="774.25" cy="639.25" r="14" fill="#378cba" fill-opacity=".78"/><text x="774.25" y="642.85" font-family="'Liberation Sans',sans-serif" font-size="12" fill="#fff" text-anchor="middle">111</text>
<circle cx="887.5" cy="633.75" r="18.3" fill="#52a2cf" fill-opacity=".36"/><circle cx="887.5" cy="633.75" r="14" fill="#378cba" fill-opacity=".78"/><text x="887.5" y="637.35" font-family="'Liberation Sans',sans-serif" font-size="12" fill="#fff" text-anchor="middle">42</text>
<circle cx="913.75" cy="643" r="18.3" fill="#52a2cf" fill-opacity=".36"/><circle cx="913.75" cy="643" r="14" fill="#378cba" fill-opacity=".78"/><text x="913.75" y="646.6" font-family="'Liberation Sans',sans-serif" font-size="12" fill="#fff" text-anchor="middle">107</text>
<circle cx="686.75" cy="664.5" r="18.3" fill="#52a2cf" fill-opacity=".36"/><circle cx="686.75" cy="664.5" r="14" fill="#378cba" fill-opacity=".78"/><text x="686.75" y="668.1" font-family="'Liberation Sans',sans-serif" font-size="12" fill="#fff" text-anchor="middle">9</text>
<circle cx="820" cy="677.5" r="18.3" fill="#52a2cf" fill-opacity=".36"/><circle cx="820" cy="677.5" r="14" fill="#378cba" fill-opacity=".78"/><text x="820" y="681.1" font-family="'Liberation Sans',sans-serif" font-size="12" fill="#fff" text-anchor="middle">7</text>
<circle cx="931.25" cy="715" r="18.3" fill="#52a2cf" fill-opacity=".36"/><circle cx="931.25" cy="715" r="14" fill="#378cba" fill-opacity=".78"/><text x="931.25" y="718.6" font-family="'Liberation Sans',sans-serif" font-size="12" fill="#fff" text-anchor="middle">47</text>
<circle cx="842" cy="733.25" r="18.3" fill="#52a2cf" fill-opacity=".36"/><circle cx="842" cy="733.25" r="14" fill="#378cba" fill-opacity=".78"/><text x="842" y="736.85" font-family="'Liberation Sans',sans-serif" font-size="12" fill="#fff" text-anchor="middle">18</text>
<circle cx="783" cy="745" r="18.3" fill="#52a2cf" fill-opacity=".36"/><circle cx="783" cy="745" r="14" fill="#378cba" fill-opacity=".78"/><text x="783" y="748.6" font-family="'Liberation Sans',sans-serif" font-size="12" fill="#fff" text-anchor="middle">5</text>
</g>
</svg>

<div class="b" id="zoomc"><div class="b" style="left:0;top:26px;width:26px;height:1px;background:#ccc"></div><div class="b" style="left:7.5px;top:41.3px;width:11.5px;height:2.4px;background:#111"></div></div>
<div class="b" id="mfbtn"></div>
<div class="b" id="attr"></div>
</div>
<!-- LIST -->
<div class="b" id="list"><div class="b" id="lhead"></div></div>
<div class="pg on" style="left:412.5px;width:27.8px">1</div>
<div class="pg" style="left:444.2px;width:27.8px">2</div>
<div class="pg" style="left:476.0px;width:27.8px">3</div>
<div class="pg" style="left:507.8px;width:27.8px">4</div>
<div class="pg" style="left:539.5px;width:27.8px">5</div>
<div class="pg" style="left:571.2px;width:27.8px">6</div>
<div class="pg" style="left:603.0px;width:27.8px">7</div>
<div class="pg" style="left:634.8px;width:27.8px">8</div>
<div class="pg" style="left:666.5px;width:27.8px">9</div>
<div class="pg" style="left:698.2px;width:30.6px">10</div>
<div class="pg" style="left:732.9px;width:30.6px">11</div>
<div class="pg" style="left:767.5px;width:30.6px">12</div>
<div class="pg" style="left:802.1px;width:30.6px">13</div>
<div class="pg" style="left:836.7px;width:30.6px">14</div>
<div class="pg" style="left:871.3px;width:30.6px">15</div>
<div class="pg" style="left:905.9px;width:30.6px">16</div>
<div class="pg" style="left:940.5px;width:30.6px">17</div>
<div class="pg" style="left:975.1px;width:30.6px">18</div>
<div class="pg" style="left:1009.7px;width:30.6px">19</div>
<div class="pg" style="left:1044.3px;width:30.6px">20</div>
<div class="pg" style="left:1078.9px;width:28.0px;font-size:12.5px;font-weight:normal;letter-spacing:0;line-height:23px">→</div>
<div class="b" id="sep1"></div>
<div class="b ph" style="top:971px"><svg width="112" height="83" viewBox="0 0 112 83">
<defs><linearGradient id="sk1" x1="0" y1="0" x2="0" y2="1"><stop offset="0" stop-color="#34457e"/><stop offset=".4" stop-color="#5b5a84"/><stop offset=".62" stop-color="#8a6a7c"/><stop offset=".8" stop-color="#cf8a72"/><stop offset="1" stop-color="#c9907a"/></linearGradient>
<pattern id="spk" width="7" height="5" patternUnits="userSpaceOnUse"><rect x="1" y="1" width="2" height="1" fill="#8d959a" opacity=".55"/><rect x="4" y="3" width="2" height="1" fill="#1d2226" opacity=".6"/></pattern>
<pattern id="win" width="3" height="3" patternUnits="userSpaceOnUse"><rect width="3" height="1.200" fill="#4a4338" opacity=".55"/></pattern>
<pattern id="lit" width="9" height="6" patternUnits="userSpaceOnUse"><rect x="2" y="2" width="1.500" height="1" fill="#d9a04a" opacity=".7"/><rect x="6" y="4" width="2" height="1" fill="#7d8489" opacity=".6"/></pattern></defs>
<rect width="112" height="83" fill="#3a322c"/>
<rect width="112" height="10.500" fill="url(#sk1)"/>
<rect y="10" width="112" height="14" fill="#2d353d"/><rect y="10" width="112" height="14" fill="url(#spk)"/>
<rect y="22" width="112" height="11" fill="#4b5359"/><rect y="22" width="50" height="11" fill="url(#spk)"/>
<path d="M0 27l16-3 14 2v7H0z" fill="#7f898d"/>
<path d="M52 25l20-3 24 1 16-2v13H58z" fill="#a4acad"/><path d="M60 24l30-1 22 4v3l-50-2z" fill="#c3c8c8" opacity=".7"/>
<rect y="32" width="112" height="9" fill="#7e8b8b"/><rect y="32.500" width="112" height="2.500" fill="#a3abab" opacity=".8"/><rect y="37" width="112" height="4" fill="#66726f"/>
<rect y="41" width="112" height="11" fill="#3f403d"/><rect y="41" width="112" height="11" fill="url(#spk)"/>
<path d="M66 42l46-1v9l-40 1z" fill="#7d8586" opacity=".75"/><path d="M70 46l42-1v2l-42 1z" fill="#c9cdcd" opacity=".7"/>
<rect y="52" width="112" height="31" fill="#3a302a"/><rect y="52" width="112" height="31" fill="url(#lit)"/>
<!-- bridge -->
<path d="M41 20l3.500-1 12 18 10 12-8 3-9-14z" fill="#7a7467"/><path d="M42.500 20l12 18 9 12" stroke="#4b4640" stroke-width=".7" fill="none"/>
<!-- far towers -->
<path d="M27 17l4-2 7 1 2 3v9H28z" fill="#6d6a62"/><rect x="31" y="19" width="2" height="8" fill="#2e2c29"/>
<!-- main tower -->
<path d="M18 31l4-2 5 2v32l-7-2z" fill="#7d735f"/><path d="M28 27l5-2 8 1 1 3 .5 33-8 4-6.500-3z" fill="#8a7f69"/>
<rect x="18" y="31" width="24" height="33" fill="url(#win)" opacity=".8"/><path d="M25.500 30h2.800v33h-2.800z" fill="#2e2822"/>
<path d="M34.500 26l7.500 1 .5 36-8 3z" fill="#6d6453" opacity=".55"/>
<path d="M8 60l12 2 8 2 8 3 8-4 6 1-14 9-28-7z" fill="#5a4732"/><path d="M9 61.500l10 2v3.500l-10-2.500z M40 64l8-3v3l-8 3z" fill="#c9961f"/>
<!-- white building -->
<path d="M50.500 50l8-2.500 10 1 2 2v19l-8 3-12-5z" fill="#e6e8e5"/><path d="M70.500 51l5.500-.5v18l-5.500 2.500z" fill="#8b8e90"/>
<path d="M51 53.500h19M51 57.500h19M51 61.500h19M51 65.500h19" stroke="#6b7174" stroke-width="1.300"/><path d="M56 49v21M62 49v23M67 49v22" stroke="#e6e8e5" stroke-width="1.400"/>
<path d="M78 52l20-1.500 5 9-24 4z" fill="#4a4c4e"/><path d="M78.500 60l24-2.500v2.500l-23 4.500z" fill="#c4c2bb"/><path d="M98 50l8 2 2 10-5 1z" fill="#6b4a2e"/>
<path d="M49 65l-10 7 18 9.500 23-13.500-4-2" fill="none" stroke="#e8243c" stroke-width="1.150"/>
<path d="M3 78l24-5.500 9 6-6 4.500H6z" fill="#3b4046"/><path d="M70 80l10-4 18-2 14 3v6H72z" fill="#42464a"/><path d="M86 78l16-4 10 3v3l-18 2z" fill="#5b6064"/>
<path d="M92 74l12-7 8 2v3l-14 7z" fill="#705a32"/><rect x="32" y="82" width="5" height="1" fill="#3fce3f"/>
</svg>
</div>
<div class="b ph" style="top:1144px"><svg width="112" height="83" viewBox="0 0 112 83">
<defs><linearGradient id="sk2" x1="0" y1="0" x2="0" y2="1"><stop offset="0" stop-color="#1b58d0"/><stop offset=".45" stop-color="#3a79da"/><stop offset=".72" stop-color="#7facE6"/><stop offset=".85" stop-color="#a9c8ec"/></linearGradient>
<pattern id="w2" width="5" height="4" patternUnits="userSpaceOnUse"><rect width="1.200" height="4" fill="#b9b4ae" opacity=".55"/></pattern></defs>
<rect width="112" height="83" fill="url(#sk2)"/>
<rect y="70" width="112" height="13" fill="#a39783"/><rect y="75" width="112" height="8" fill="#b1a692"/><rect y="69.500" width="112" height="1.500" fill="#6b665e"/>
<path d="M0 53l2-1 6 5v13H0z" fill="#2c3038"/>
<path d="M9 40l27-8.500 24-11.500 15 7.500 29 14.500 1 7v22H9z" fill="#6b6763"/>
<path d="M10 41l26-8v8l-26 6z" fill="#9a9590"/><path d="M37 33l22-9.500v9l-22 7z" fill="#a39e99"/><path d="M62 24.500l12 6v9l-12-4.500z" fill="#8f8a86"/><path d="M75 31l28 13v6l-28-9z" fill="#7d7975"/>
<path d="M8 39.500l28-9v2.600l-27.500 9z" fill="#241f1c"/><path d="M35 30.500l25-11.500 15.500 7.700-.8 2.800-14.700-6.800-24.500 10.500z" fill="#27221f"/><path d="M74.500 27l30 15v3l-30-14z" fill="#25201d"/>
<path d="M56.800 24l5.400-1.500v48h-5.400z" fill="#b4b0ac"/><path d="M35.500 32h2.300v38h-2.300z" fill="#9b9793"/><path d="M9 42h3v28H9z" fill="#8e8a87"/>
<path d="M13 48l21-5.500v7l-21 3.500z" fill="#3d3d43"/><path d="M13 56l21-2.500v9l-21 1z" fill="#87858c"/><rect x="13" y="56" width="21" height="8" fill="url(#w2)"/>
<path d="M39 44l17-3.500v23H39z" fill="#22242a"/><path d="M63.500 41l11 3.500v19h-11z" fill="#27292f"/><path d="M39 40l17-4.500v4l-17 4z" fill="#c9c5c0" opacity=".7"/>
<path d="M76 45l14 5v14H76z" fill="#4d4a49"/><path d="M90 50l14 5v12H90z" fill="#5e5a58"/>
<path d="M78 46l5-6 5 3 4 7 2 8-4 8-10-1-3-9z" fill="#55703c"/><path d="M82 44l4 2 2 8-5 4-3-6z" fill="#7d9a55" opacity=".7"/><path d="M96 54l5-9 6 9 1 12H96z" fill="#2c4a30"/>
<circle cx="72" cy="37.500" r="1.700" fill="#fff"/><circle cx="72" cy="37.500" r="3" fill="#fff" opacity=".35"/>
<rect x="9" y="63" width="97" height="7.500" fill="#3a393e"/>
<path d="M10 61h7v3.500h-7z M77 61h7v3.500h-7z M41 55h3.600v6H41z M46 58h3v4h-3z" fill="#2b93d6"/><path d="M24 61h3v4h-3z" fill="#e9d83c"/>
<path d="M22 69.500l6-2 8 1 1 4H23z" fill="#c43a2a"/><path d="M80 68l14-1 4 5.500H80z" fill="#c98a48"/><path d="M30 69l5-3 4 3v3h-9z" fill="#5a8a3a"/><path d="M96 68l8-1 4 4v2H96z" fill="#3b3d44"/>
<rect x="0" y="70" width="20" height="1.300" fill="#4c8a3a"/>
<rect x="104.500" y="17" width="7.500" height="21.500" rx="1" fill="#e6dfd2"/><circle cx="112" cy="26" r="5" fill="none" stroke="#b3221f" stroke-width="1.700"/><rect x="104.500" y="38.500" width="7.500" height="3" fill="#c9c0ae"/><rect x="108" y="41" width="4" height="30" fill="#6d5a40"/>
</svg>
</div>
<div class="b badge" style="top:969.8px"></div>
<div class="b badge" style="top:1143.1px"></div>
<div class="b qv" style="top:1099px"></div><div class="b dv" style="top:1098px"></div>
<div class="b qv" style="top:1244.7px"></div><div class="b dv" style="top:1243.7px"></div>
<!-- TEXT -->
<div class="t" style="left:179.7px;top:14.6px;font-size:14px;color:#1f1f1f;transform:scaleX(0.9956);">kinash.ca/home-v3?reso_results_limit=50&amp;reso_city=Saskatoon</div>
<div class="t" style="left:1444.0px;top:14.8px;font-size:13px;color:#0a2a66;transform:scaleX(0.9634);">New Chrome available</div>
<div class="t" style="left:1254.4px;top:16.5px;font-size:10px;color:#333;font-weight:bold;letter-spacing:0.37px;">JS</div>
<div class="t" style="left:63.7px;top:52.3px;font-size:13px;color:#f0f0f1;transform:scaleX(0.9428);text-shadow:0 0 .4px #f0f0f1">Brian Kinash</div>
<div class="t" style="left:172.0px;top:52.3px;font-size:13px;color:#f0f0f1;transform:scaleX(0.9606);text-shadow:0 0 .4px #f0f0f1">Customize</div>
<div class="t" style="left:315.5px;top:52.3px;font-size:13px;color:#f0f0f1;transform:scaleX(0.9494);text-shadow:0 0 .4px #f0f0f1">New</div>
<div class="t" style="left:378.5px;top:52.3px;font-size:13px;color:#f0f0f1;transform:scaleX(0.9313);text-shadow:0 0 .4px #f0f0f1">Edit Page</div>
<div class="t" style="left:445.8px;top:52.3px;font-size:13px;color:#f0f0f1;transform:scaleX(0.9617);text-shadow:0 0 .4px #f0f0f1">Maintenance is On</div>
<div class="t" style="left:567.0px;top:52.3px;font-size:13px;color:#f0f0f1;transform:scaleX(0.9694);text-shadow:0 0 .4px #f0f0f1">Scheduled Posts (0)</div>
<div class="t" style="left:697.0px;top:52.3px;font-size:13px;color:#f0f0f1;transform:scaleX(0.9573);text-shadow:0 0 .4px #f0f0f1">Edit with WPBakery Page Builder</div>
<div class="t" style="left:1435.0px;top:52.3px;font-size:13px;color:#f0f0f1;transform:scaleX(0.9622);text-shadow:0 0 .4px #f0f0f1">Howdy, myadmin</div>
<div class="t" style="left:269.5px;top:52.3px;font-size:13px;color:#a7aaad;">0</div>
<div class="t" style="left:1325.5px;top:54.2px;font-size:13px;color:#f0f0f1;transform:scaleX(0.9634);text-shadow:0 0 .4px #f0f0f1">Flush site cache</div>
<div class="t" style="left:590.0px;top:109.0px;font-size:12px;color:#2d2d2d;font-weight:bold;letter-spacing:2.00px;transform:scaleX(0.9);-webkit-text-stroke:.3px #2d2d2d">HOME</div>
<div class="t" style="left:656.6px;top:109.0px;font-size:12px;color:#f95f51;font-weight:bold;letter-spacing:2.11px;transform:scaleX(0.9);-webkit-text-stroke:.3px #f95f51">HOME</div>
<div class="t" style="left:723.3px;top:109.0px;font-size:12px;color:#2d2d2d;font-weight:bold;letter-spacing:1.29px;transform:scaleX(0.9);-webkit-text-stroke:.3px #2d2d2d">BLOG</div>
<div class="t" style="left:787.3px;top:109.0px;font-size:12px;color:#2d2d2d;font-weight:bold;letter-spacing:1.41px;transform:scaleX(0.9);-webkit-text-stroke:.3px #2d2d2d">CONTACT US</div>
<div class="t" style="left:898.0px;top:109.0px;font-size:12px;color:#2d2d2d;font-weight:bold;letter-spacing:1.01px;transform:scaleX(0.9);-webkit-text-stroke:.3px #2d2d2d">FEATURED</div>
<div class="t" style="left:992.3px;top:109.0px;font-size:12px;color:#2d2d2d;font-weight:bold;letter-spacing:1.13px;transform:scaleX(0.9);-webkit-text-stroke:.3px #2d2d2d">ELEMENTS</div>
<div class="t" style="left:1087.6px;top:109.0px;font-size:12px;color:#2d2d2d;font-weight:bold;letter-spacing:1.41px;transform:scaleX(0.9);-webkit-text-stroke:.3px #2d2d2d">NEWS</div>
<div class="t" style="left:1153.2px;top:109.0px;font-size:12px;color:#2d2d2d;font-weight:bold;letter-spacing:1.39px;transform:scaleX(0.9);-webkit-text-stroke:.3px #2d2d2d">PORTFOLIO</div>
<div class="t" style="left:1255.6px;top:109.0px;font-size:12px;color:#2d2d2d;font-weight:bold;letter-spacing:0.95px;transform:scaleX(0.9);-webkit-text-stroke:.3px #2d2d2d">CASE STUDIES</div>
<div class="t" style="left:1373.8px;top:109.0px;font-size:12px;color:#2d2d2d;font-weight:bold;letter-spacing:1.33px;transform:scaleX(0.9);-webkit-text-stroke:.3px #2d2d2d">SHOP</div>
<div class="t" style="left:410.5px;top:173.8px;font-size:10px;color:#0a72ab;font-weight:bold;letter-spacing:2.59px;">FILTERS</div>
<div class="t" style="left:479.5px;top:173.8px;font-size:10px;color:#0a72ab;font-weight:bold;">1</div>
<div class="t" style="left:527.0px;top:172.3px;font-size:12px;color:#5f5647;transform:scaleX(0.9788);">Results Per Page: 50</div>
<div class="t" style="left:644.6px;top:174.0px;font-size:10px;color:#5f5647;font-weight:bold;">×</div>
<div class="t" style="left:399.0px;top:273.5px;font-size:13px;color:#6d7278;letter-spacing:0.43px;">794 properties found</div>
<div class="t" style="left:925.6px;top:251.5px;font-size:10px;color:#444;font-weight:bold;transform:scaleX(0.8800);">SORT:</div>
<div class="t" style="left:439.4px;top:370.5px;font-size:11px;color:#333;letter-spacing:1.93px;">FILTERS</div>
<div class="t" style="left:987.5px;top:841.6px;font-size:10.8px;color:#2c83b0;letter-spacing:0.06px;">Leaflet</div>
<div class="t" style="left:1023.6px;top:841.6px;font-size:10.8px;color:#666;">|</div>
<div class="t" style="left:1030.0px;top:841.6px;font-size:10.8px;color:#333;">©</div>
<div class="t" style="left:1041.8px;top:841.6px;font-size:10.8px;color:#2c83b0;letter-spacing:0.27px;">OpenStreetMap</div>
<div class="t" style="left:1124.2px;top:841.6px;font-size:10.8px;color:#333;letter-spacing:0.33px;">contributors</div>
<div class="t" style="left:413.0px;top:896.8px;font-size:12px;color:#444;letter-spacing:0.23px;">500 properties in view</div>
<div class="t" style="left:547.0px;top:982.2px;font-size:10.4px;color:#1e6b38;font-weight:bold;transform:scaleX(0.9263);">ACTIVE</div>
<div class="t" style="left:592.5px;top:978.0px;font-size:15px;color:#0a72ab;font-weight:bold;transform:scaleX(0.9686);">$16,000,000</div>
<div class="t" style="left:538.2px;top:1010.8px;font-size:13px;color:#333;transform:scaleX(0.9978);">317 4th AVENUE S</div>
<div class="t" style="left:538.0px;top:1035.1px;font-size:11px;color:#888;transform:scaleX(0.9851);">Saskatoon, SK</div>
<div class="t" style="left:547.0px;top:1155.5px;font-size:10.4px;color:#1e6b38;font-weight:bold;transform:scaleX(0.9263);">ACTIVE</div>
<div class="t" style="left:592.5px;top:1151.3px;font-size:15px;color:#0a72ab;font-weight:bold;transform:scaleX(0.9783);">$11,650,000</div>
<div class="t" style="left:538.2px;top:1184.1px;font-size:13px;color:#333;letter-spacing:0.24px;">701 Broadway AVENUE</div>
<div class="t" style="left:538.0px;top:1208.4px;font-size:11px;color:#888;transform:scaleX(0.9851);">Saskatoon, SK</div>
<div class="t" style="left:537.5px;top:1067.3px;font-size:10px;color:#a0a0a0;transform:scaleX(0.8760);">SQ FT</div>
<div class="t" style="left:571.0px;top:1065.6px;font-size:12px;color:#444;transform:scaleX(0.9774);">36,848 sq ft</div>
<div class="t" style="left:550.8px;top:1105.4px;font-size:11px;color:#fff;font-weight:bold;letter-spacing:2.26px;">QUICK VIEW</div>
<div class="t" style="left:675.6px;top:1105.4px;font-size:11px;color:#0a72ab;font-weight:bold;transform:scaleX(0.9812);">Detail View</div>
<div class="t" style="left:550.8px;top:1251.1px;font-size:11px;color:#fff;font-weight:bold;letter-spacing:2.26px;">QUICK VIEW</div>
<div class="t" style="left:675.6px;top:1251.1px;font-size:11px;color:#0a72ab;font-weight:bold;transform:scaleX(0.9812);">Detail View</div>
</body>
</html>
